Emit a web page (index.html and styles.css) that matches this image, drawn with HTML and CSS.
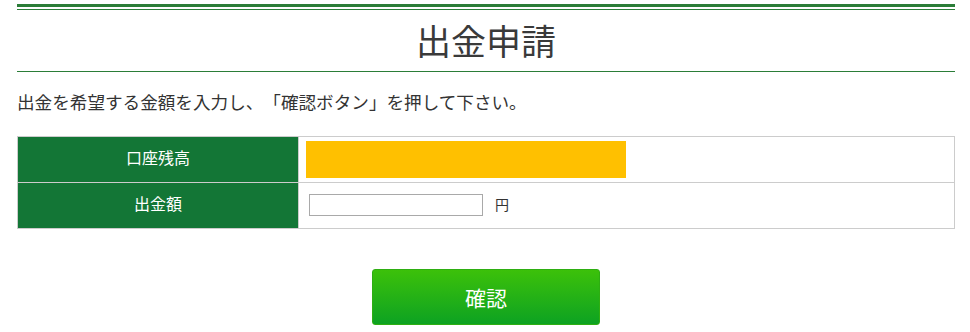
FILE: index.html
```html
<!DOCTYPE html>
<html lang="ja">
<head>
<meta charset="utf-8">
<title>出金申請</title>
<link rel="stylesheet" href="styles.css">
</head>
<body>
<div class="page">
  <header class="head">
    <div class="head-inner">
      <h1 class="title">出金申請</h1>
    </div>
  </header>
  <p class="lead">出金を希望する金額を入力し、「確認ボタン」を押して下さい。</p>
  <table class="form">
    <tr>
      <th class="label">口座残高</th>
      <td class="value"><div class="balance"></div></td>
    </tr>
    <tr>
      <th class="label">出金額</th>
      <td class="value"><input class="amount" type="text"><span class="unit">円</span></td>
    </tr>
  </table>
  <div class="actions">
    <button class="confirm" type="button">確認</button>
  </div>
</div>
</body>
</html>
```

FILE: styles.css
```css
html, body {
  margin: 0;
  padding: 0;
  background: #fff;
}
body {
  font-family: "Noto Sans CJK JP", "Noto Sans", sans-serif;
  color: #333;
  text-spacing-trim: space-all;
}
.page {
  width: 938px;
  margin-left: 17px;
  padding-top: 4px;
}
.head {
  border-top: 3px solid #2b7d38;
  padding-top: 2px;
}
.head-inner {
  border-top: 1px solid #2b7d38;
  border-bottom: 1px solid #2b7d38;
}
.title {
  margin: 0;
  height: 61px;
  line-height: 59px;
  text-align: center;
  font-size: 35px;
  font-weight: 400;
  color: #3a3a3a;
}
.lead {
  margin: 18px 0 0;
  font-size: 17.6px;
  line-height: 24px;
  height: 24px;
  color: #333;
}
.form {
  margin-top: 22px;
  width: 938px;
  border-collapse: collapse;
  table-layout: fixed;
}
.form th, .form td {
  border: 1px solid #cccccc;
  height: 45px;
  padding: 0;
  box-sizing: border-box;
}
.form tr {
  height: 46px;
}
.label {
  width: 281px;
  background: #137636;
  color: #fff;
  font-size: 16px;
  font-weight: 400;
  line-height: 20px;
  text-align: center;
  vertical-align: middle;
  padding-bottom: 5px !important;
}
.value {
  padding: 0 7px !important;
  vertical-align: middle;
  line-height: 22px;
}
.balance {
  width: 320px;
  height: 37px;
  background: #ffc000;
}
.amount {
  box-sizing: border-box;
  width: 174px;
  height: 22px;
  margin: 0 0 2px 3px;
  padding: 0 4px;
  border: 1px solid #a9a9a9;
  border-radius: 0;
  vertical-align: middle;
  font-size: 14px;
}
.unit {
  display: inline-block;
  margin: 0 0 5px 12px;
  font-size: 14px;
  line-height: 16px;
  color: #333;
  vertical-align: middle;
}
.actions {
  display: flex;
  justify-content: center;
  padding-top: 40px;
}
.confirm {
  width: 228px;
  height: 56px;
  border: 1px solid #2eae12;
  border-radius: 3px;
  background: linear-gradient(#3cc10a, #0da222);
  color: #fff;
  font-family: "Noto Sans CJK JP", sans-serif;
  font-size: 21px;
  cursor: pointer;
}
```
